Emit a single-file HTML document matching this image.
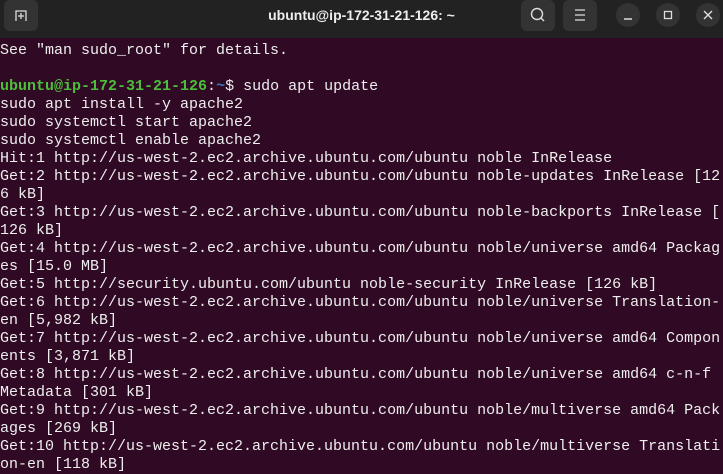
<!DOCTYPE html><html><head><style>
body{margin:0;width:723px;height:469px;overflow:hidden;background:#300a24;font-family:"Liberation Mono",monospace}
.bar{position:absolute;left:0;top:0;width:723px;height:38px;background:#222}
.btn{position:absolute;top:0;width:34px;height:31px;background:#333;border-radius:6px}
.c{position:absolute;top:3px;width:24px;height:24px;border-radius:50%;background:#333}
.title{position:absolute;top:0;left:0;width:723px;text-align:center;color:#eee;font:bold 14px "Liberation Sans",sans-serif;line-height:30px}
pre{position:absolute;left:0;top:42px;margin:0;color:#eee;font:15px/18px "Liberation Mono",monospace;white-space:pre}
.g{color:#4cbf3a;font-weight:bold}.b{color:#3a78c6;font-weight:bold}
</style></head><body>
<div class="bar">
<div class="btn" style="left:4px"><svg width="34" height="31"><path d="M12 21V11h10v10M17 13v6M14 16h6" stroke="#ddd" stroke-width="1.3" fill="none"/></svg></div>
<div class="title">ubuntu@ip-172-31-21-126: ~</div>
<div class="btn" style="left:521px"><svg width="34" height="31"><circle cx="16" cy="14" r="5.5" stroke="#ddd" stroke-width="1.4" fill="none"/><path d="M20 18l3 3" stroke="#ddd" stroke-width="1.5"/></svg></div>
<div class="btn" style="left:563px"><svg width="34" height="31"><path d="M12 10h10M12 15h10M12 20h10" stroke="#ddd" stroke-width="1.3"/></svg></div>
<div class="c" style="left:616px"><svg width="24" height="24"><path d="M8 16h8" stroke="#ddd" stroke-width="1.5"/></svg></div>
<div class="c" style="left:656px"><svg width="24" height="24"><rect x="8.5" y="8.5" width="7" height="7" stroke="#ddd" stroke-width="1.3" fill="none"/></svg></div>
<div class="c" style="left:696px"><svg width="24" height="24"><path d="M8 8l8 8M16 8l-8 8" stroke="#ddd" stroke-width="1.4"/></svg></div>
</div>
<pre>See "man sudo_root" for details.

<span class="g">ubuntu@ip-172-31-21-126</span>:<span class="b">~</span>$ sudo apt update
sudo apt install -y apache2
sudo systemctl start apache2
sudo systemctl enable apache2
Hit:1 http://us-west-2.ec2.archive.ubuntu.com/ubuntu noble InRelease
Get:2 http://us-west-2.ec2.archive.ubuntu.com/ubuntu noble-updates InRelease [12
6 kB]
Get:3 http://us-west-2.ec2.archive.ubuntu.com/ubuntu noble-backports InRelease [
126 kB]
Get:4 http://us-west-2.ec2.archive.ubuntu.com/ubuntu noble/universe amd64 Packag
es [15.0 MB]
Get:5 http://security.ubuntu.com/ubuntu noble-security InRelease [126 kB]
Get:6 http://us-west-2.ec2.archive.ubuntu.com/ubuntu noble/universe Translation-
en [5,982 kB]
Get:7 http://us-west-2.ec2.archive.ubuntu.com/ubuntu noble/universe amd64 Compon
ents [3,871 kB]
Get:8 http://us-west-2.ec2.archive.ubuntu.com/ubuntu noble/universe amd64 c-n-f
Metadata [301 kB]
Get:9 http://us-west-2.ec2.archive.ubuntu.com/ubuntu noble/multiverse amd64 Pack
ages [269 kB]
Get:10 http://us-west-2.ec2.archive.ubuntu.com/ubuntu noble/multiverse Translati
on-en [118 kB]</pre>
</body></html>
